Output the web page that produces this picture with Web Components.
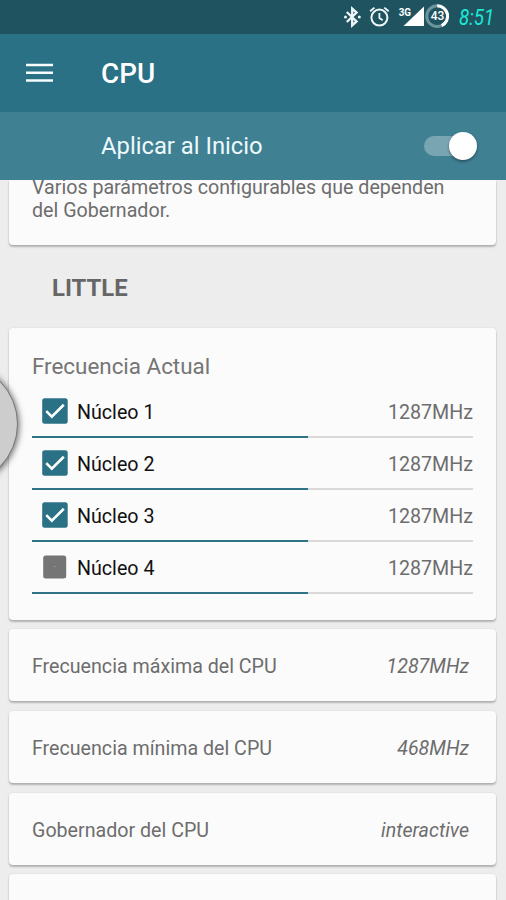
<!DOCTYPE html>
<html lang="es">
<head>
<meta charset="utf-8">
<title>CPU</title>
<style>
html,body{margin:0;height:100%;overflow:hidden;background:#ededed}
body{font-family:Roboto,"Liberation Sans",sans-serif;color:#6d6d6d}
</style>
</head>
<body>
<cpu-screen></cpu-screen>
<script>
const define = (name, html, setup) => customElements.define(name, class extends HTMLElement {
  constructor() {
    super();
    this.attachShadow({mode: 'open'}).innerHTML = html;
  }
  connectedCallback() { if (setup) setup(this, this.shadowRoot); }
});

define('status-bar', `<style>
:host{display:flex;height:34px;background:#1f535f;box-sizing:border-box;justify-content:flex-end;align-items:center;padding-right:11px}
svg{display:block;flex:none}
.clock{width:36px;margin-left:9px;height:34px;line-height:35px;color:#1de9d6;font-size:21.5px;font-style:italic;white-space:nowrap}
.clock span{display:inline-block;transform:scaleX(.875);transform-origin:0 50%}
</style>
<svg width="110" height="34" viewBox="340 0 110 34" fill="none">
  <path d="M346.8 12l9.8 9.4-4.4 4V8.6l4.4 4-9.8 9.4" stroke="#eef7f8" stroke-width="2.3"/>
  <circle cx="345.5" cy="17" r="1.5" fill="#eef7f8"/><circle cx="359.3" cy="17" r="1.5" fill="#eef7f8"/>
  <circle cx="379.4" cy="17.6" r="8" stroke="#eef7f8" stroke-width="2"/>
  <path d="M379.4 13v5l3.3 2.2M370.1 11.3l4.4-3.7M388.7 11.3l-4.4-3.7" stroke="#eef7f8" stroke-width="1.8"/>
  <path d="M403.5 26L424 6.5V26z" fill="#fff"/>
  <text x="398.7" y="15.6" font-family="Roboto,sans-serif" font-size="11.5" font-weight="700" fill="#fff" textLength="12.4" lengthAdjust="spacingAndGlyphs">3G</text>
  <circle cx="437.2" cy="16.2" r="10.4" stroke="#6e949b" stroke-width="3"/>
  <path d="M437.2 5.8A10.4 10.4 0 0 1 441.7 25.6" stroke="#fff" stroke-width="3"/>
  <text x="437.6" y="20" text-anchor="middle" font-family="Roboto,sans-serif" font-size="12" font-weight="500" fill="#fff">43</text>
</svg>
<div class="clock"><span>8:51</span></div>`);

define('app-bar', `<style>
:host{display:flex;align-items:center;height:78px;background:#2a7186;color:#fff;padding-left:26px;box-sizing:border-box}
svg{display:block}
h1{margin:2px 0 0 48px;font-size:27.8px;font-weight:500;line-height:34px}
</style>
<svg width="27" height="20" viewBox="0 0 27 20"><path d="M0 1.9h27M0 9.7h27M0 17.5h27" stroke="#f5fcfd" stroke-width="2.5"/></svg>
<h1><slot></slot></h1>`);

define('toggle-switch', `<style>
:host{display:flex;align-items:center;justify-content:flex-end;width:53px;height:28px}
.track{display:flex;align-items:center;justify-content:flex-end;width:53px;height:20px;border-radius:10px;background:linear-gradient(90deg,#79a5b3 42px,transparent 42px)}
.thumb{flex:none;width:28px;height:28px;border-radius:50%;background:#fff;box-shadow:0 1.5px 3px #0006}
</style><div class="track"><div class="thumb"></div></div>`);

define('apply-bar', `<style>
:host{display:flex;align-items:center;justify-content:space-between;height:68px;background:#3f8093;color:#eef9fb;padding:0 29px 0 101px;box-sizing:border-box;font-size:23.8px}
</style><span><slot></slot></span><toggle-switch></toggle-switch>`);

define('ui-card', `<style>
:host{display:block;background:#fbfbfb;border-radius:4px;box-sizing:border-box;padding:0 23px;box-shadow:0 2px 2px #0000003d,0 0 2px #0000001c}
</style><slot></slot>`);

define('setting-card', `<style>
:host{display:block}
.row{display:flex;align-items:center;justify-content:space-between;height:72px;padding:4px 4px 0 0;box-sizing:border-box;font-size:19.65px;line-height:24px}
em{font-style:italic}
</style><ui-card><div class="row"><span><slot></slot></span><em><slot name="value"></slot></em></div></ui-card>`);

define('check-box', `<style>
:host{display:block;width:26px;height:26px}
svg{display:block}.off{display:none}
:host([off]) .on{display:none}
:host([off]) .off{display:block}
</style>
<svg class="on" width="26" height="26" viewBox="0 0 26 26"><rect x=".2" y=".2" width="25.5" height="25.5" rx="2.5" fill="#2a7186"/><path d="M4.3 13.1l5.5 5.5L21.8 6.8" fill="none" stroke="#fff" stroke-width="2.6"/></svg>
<svg class="off" width="26" height="26" viewBox="0 0 26 26"><rect x="1.2" y="1.5" width="23" height="23" rx="2.5" fill="#757575"/><path d="M11.5 12.5h2.5" stroke="#8a8a8a"/></svg>`);

define('core-row', `<style>
:host{display:block;height:52px}
.line{display:flex;align-items:center;height:50px;padding-left:10px;font-size:19.65px;line-height:24px}
.name{color:#111;margin-left:9px;flex:1}
.name,.freq{padding-top:5px}
.bar{height:2px;background:linear-gradient(90deg,#2f7386 276px,#d9d9d9 276px)}
</style>
<div class="line"><check-box></check-box><span class="name"><slot></slot></span><span class="freq">1287MHz</span></div><div class="bar"></div>`,
(el, root) => root.querySelector('check-box').toggleAttribute('off', el.hasAttribute('off')));

define('edge-bubble', `<style>
:host{position:absolute;left:-104px;top:363px;width:122px;height:122px;border-radius:50%;box-sizing:border-box;background:#cdcdcd;border:1px solid #777;box-shadow:1px 1px 6px #0009}
</style>`);

define('cpu-screen', `<style>
:host{display:flex;flex-direction:column;width:506px;height:900px;position:relative;overflow:hidden;background:#ededed}
main{flex:1;min-height:0;overflow:hidden;padding:0 10px 0 9px}
.first{border-radius:0 0 4px 4px}
.desc{font-size:19.65px;line-height:23px;height:64.5px;display:flex}
.desc p{margin:-4px 0 0}
h2{margin:0;height:83px;line-height:86px;padding-left:43px;font-size:23.9px;font-weight:700;color:#666}
h3{margin:0;font-size:22.4px;font-weight:400;line-height:28px;padding:24px 0 6px;color:#757575}
.cores{height:292px}
.stack{display:flex;flex-direction:column;gap:9.7px}
</style>
<status-bar></status-bar>
<app-bar>CPU</app-bar>
<apply-bar>Aplicar al Inicio</apply-bar>
<main>
<ui-card class="first"><div class="desc"><p>Varios parámetros configurables que dependen<br>del Gobernador.</p></div></ui-card>
<h2>LITTLE</h2>
<div class="stack">
<ui-card class="cores"><h3>Frecuencia Actual</h3>
<core-row>Núcleo 1</core-row><core-row>Núcleo 2</core-row><core-row>Núcleo 3</core-row><core-row off>Núcleo 4</core-row></ui-card>
<setting-card>Frecuencia máxima del CPU<span slot="value">1287MHz</span></setting-card>
<setting-card>Frecuencia mínima del CPU<span slot="value">468MHz</span></setting-card>
<setting-card>Gobernador del CPU<span slot="value">interactive</span></setting-card>
<ui-card style="height:72px"></ui-card>
</div>
</main>
<edge-bubble></edge-bubble>`);
</script>
</body>
</html>
